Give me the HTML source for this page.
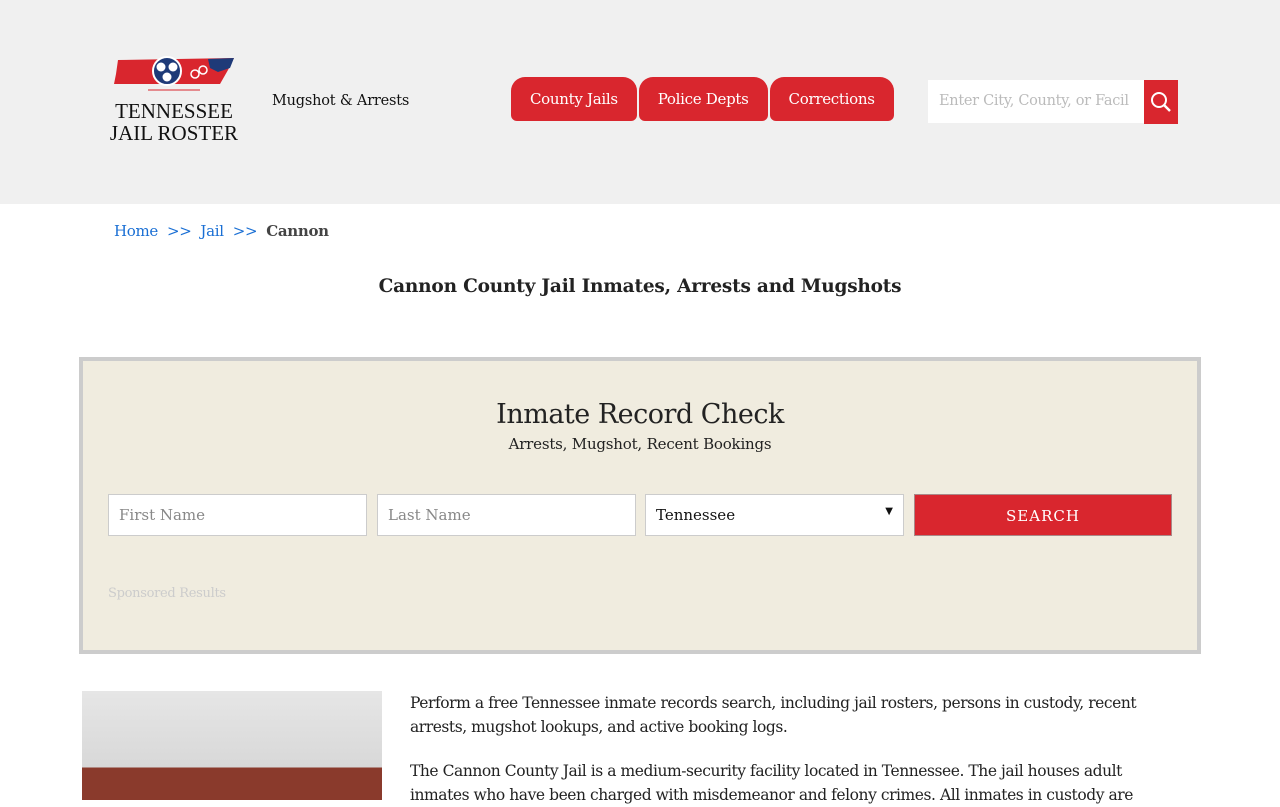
<!DOCTYPE html>
<html><head><meta charset="utf-8"><style>
*{box-sizing:border-box;margin:0;padding:0}
body{width:1280px;height:800px;overflow:hidden;background:#fff;font-family:"DejaVu Serif","Liberation Serif",serif;color:#222}
.hdr{height:204px;background:#f0f0f0;position:relative}
.logo{position:absolute;left:110px;top:56px;width:128px;height:90px}
.tag{position:absolute;left:272px;top:93px;font-size:14.5px;color:#111;letter-spacing:-0.2px}
.nav{position:absolute;left:511px;top:77px;display:flex}
.nav div{background:#d9262e;color:#fff;font-size:15px;height:44px;line-height:44px;padding:0 19px;border-radius:14px 14px 6px 6px;margin-right:2px;letter-spacing:-0.3px}
.srch{position:absolute;left:928px;top:80px;width:216px;height:43px;background:#fff;color:#bbb;font-size:14.5px;line-height:43px;padding-left:11px;white-space:nowrap;overflow:hidden;letter-spacing:-0.3px}
.sbtn{position:absolute;left:1144px;top:80px;width:34px;height:44px;background:#d9262e}
.bc{position:absolute;left:114px;top:222px;font-size:15px;color:#1a6fd4;letter-spacing:-0.3px}
.bc b{color:#444;font-weight:bold}
h1{position:absolute;top:276px;width:1280px;text-align:center;font-size:18.5px;font-weight:bold;color:#222;letter-spacing:-0.2px}
.box{position:absolute;left:79px;top:357px;width:1122px;height:297px;border:4px solid #ccc;background:#f0ecdf}
.box h2{position:absolute;top:38px;width:100%;text-align:center;font-weight:normal;font-size:27px;letter-spacing:-0.5px}
.box .s{position:absolute;top:74px;width:100%;text-align:center;font-size:15px;letter-spacing:-0.2px}
.in{position:absolute;top:133px;height:42px;width:259px;background:#fff;border:1px solid #ccc;font-size:15px;color:#888;padding:11px 10px}
.btn{position:absolute;top:133px;left:831px;width:258px;height:42px;background:#d9262e;border:1px solid #a88;color:#fff;text-align:center;line-height:42px;letter-spacing:1px;font-size:15px}
.sp{position:absolute;top:225px;left:25px;font-size:13px;color:#ccc;letter-spacing:-0.3px}
.img{position:absolute;left:82px;top:691px;width:300px;height:109px;background:linear-gradient(#e6e6e6,#d8d8d8 70%,#8a3a2c 70%)}
.p{position:absolute;left:410px;width:770px;font-size:15.5px;line-height:24px;color:#222;letter-spacing:-0.45px}
</style></head><body>
<div class="hdr">
<svg class="logo" viewBox="0 0 128 90">
<path d="M8 4 L124 2 L118 14 L110 28 L4 28 L6 18 Z" fill="#d9262e"/>
<path d="M98 3 L124 2 L120 12 L108 16 L100 12 Z" fill="#1e3a78"/>
<circle cx="57" cy="15" r="14" fill="#1e3a78" stroke="#fff" stroke-width="2"/>
<g fill="#fff"><circle cx="51" cy="11" r="4.5"/><circle cx="63" cy="11" r="4.5"/><circle cx="57" cy="21" r="4.5"/></g>
<circle cx="85" cy="18" r="4" fill="none" stroke="#fff" stroke-width="1.5"/><circle cx="93" cy="14" r="4" fill="none" stroke="#fff" stroke-width="1.5"/>
<path d="M38 34 H90" stroke="#d9262e"/>
<text x="64" y="62" text-anchor="middle" font-family="Liberation Serif" font-size="21" fill="#111">TENNESSEE</text>
<text x="64" y="84" text-anchor="middle" font-family="Liberation Serif" font-size="21" fill="#111">JAIL ROSTER</text>
</svg>
<div class="tag">Mugshot &amp; Arrests</div>
<div class="nav"><div>County Jails</div><div>Police Depts</div><div>Corrections</div></div>
<div class="srch">Enter City, County, or Facil</div>
<div class="sbtn"><svg width="34" height="44"><circle cx="15" cy="20" r="7" fill="none" stroke="#fff" stroke-width="2"/><path d="M20 25 L26 31" stroke="#fff" stroke-width="2.5"/></svg></div>
</div>
<div class="bc">Home &nbsp;&gt;&gt;&nbsp; Jail &nbsp;&gt;&gt;&nbsp; <b>Cannon</b></div>
<h1>Cannon County Jail Inmates, Arrests and Mugshots</h1>
<div class="box">
<h2>Inmate Record Check</h2>
<div class="s">Arrests, Mugshot, Recent Bookings</div>
<div class="in" style="left:25px">First Name</div>
<div class="in" style="left:294px">Last Name</div>
<div class="in" style="left:562px;color:#111">Tennessee<span style="float:right;font-size:10px">▼</span></div>
<div class="btn">SEARCH</div>
<div class="sp">Sponsored Results</div>
</div>
<div class="img"></div>
<div class="p" style="top:691px">Perform a free Tennessee inmate records search, including jail rosters, persons in custody, recent arrests, mugshot lookups, and active booking logs.</div>
<div class="p" style="top:759px">The Cannon County Jail is a medium-security facility located in Tennessee. The jail houses adult inmates who have been charged with misdemeanor and felony crimes. All inmates in custody are</div>
</body></html>
